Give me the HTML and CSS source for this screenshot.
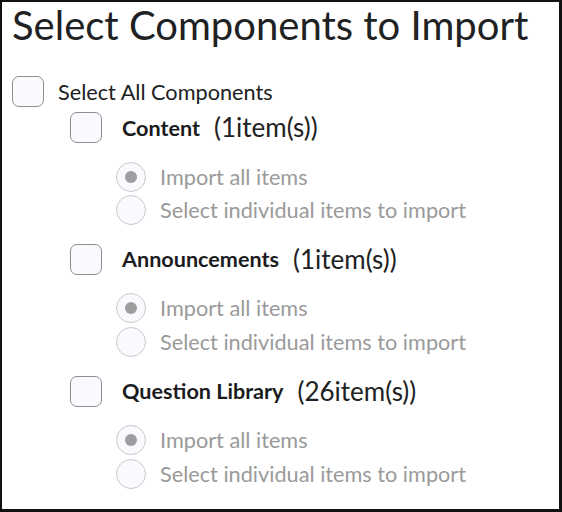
FILE: index.html
```html
<!DOCTYPE html>
<html>
<head>
<meta charset="utf-8">
<link rel="stylesheet" href="styles.css">
</head>
<body>
<div class="frame">
  <h1 class="title">Select Components to Import</h1>
  <div class="row select-all">
    <span class="checkbox"></span>
    <span class="all-label">Select All Components</span>
  </div>
  <div class="component">
    <div class="row comp-head">
      <span class="checkbox"></span>
      <span class="comp-name">Content</span>
      <span class="comp-count">(1item(s))</span>
    </div>
    <div class="options">
      <div class="row option"><span class="radio checked"></span><span class="opt-label">Import all items</span></div>
      <div class="row option"><span class="radio"></span><span class="opt-label">Select individual items to import</span></div>
    </div>
  </div>
  <div class="component">
    <div class="row comp-head">
      <span class="checkbox"></span>
      <span class="comp-name">Announcements</span>
      <span class="comp-count">(1item(s))</span>
    </div>
    <div class="options">
      <div class="row option"><span class="radio checked"></span><span class="opt-label">Import all items</span></div>
      <div class="row option"><span class="radio"></span><span class="opt-label">Select individual items to import</span></div>
    </div>
  </div>
  <div class="component">
    <div class="row comp-head">
      <span class="checkbox"></span>
      <span class="comp-name">Question Library</span>
      <span class="comp-count">(26item(s))</span>
    </div>
    <div class="options">
      <div class="row option"><span class="radio checked"></span><span class="opt-label">Import all items</span></div>
      <div class="row option"><span class="radio"></span><span class="opt-label">Select individual items to import</span></div>
    </div>
  </div>
</div>
</body>
</html>
```

FILE: styles.css
```css
html, body {
  margin: 0;
  padding: 0;
  background: #ffffff;
}

.frame {
  box-sizing: border-box;
  width: 562px;
  height: 512px;
  border: 2px solid #111111;
  border-right-width: 3px;
  border-bottom-width: 3px;
  padding: 0 0 0 10px;
  font-family: Lato, "Open Sans", sans-serif;
  color: #202122;
}

.title {
  margin: 0;
  font-size: 40px;
  font-weight: 400;
  line-height: 46px;
  letter-spacing: 0;
}

.row {
  display: flex;
  align-items: center;
}

.checkbox {
  box-sizing: border-box;
  width: 32px;
  height: 31px;
  border: 1.5px solid #8c8e91;
  border-radius: 7px;
  background: #f9fafe;
  flex: none;
}

.select-all {
  margin-top: 28px;
}

.all-label {
  margin-left: 14px;
  font-size: 21.7px;
}

.component {
  padding-left: 58px;
}

.comp-head {
  margin-top: 5px;
}

.comp-name {
  margin-left: 20px;
  font-size: 21.6px;
  font-weight: 700;
  color: #1b1c1d;
}

.comp-count {
  margin-left: 14px;
  font-size: 26px;
  line-height: 31px;
}

.options {
  padding: 17px 0 12px 46px;
}

.option {
  height: 33.4px;
}

.radio {
  box-sizing: border-box;
  position: relative;
  width: 30px;
  height: 30px;
  border: 1.5px solid #c8c9cb;
  border-radius: 50%;
  background: #f9fafe;
  flex: none;
}

.radio.checked::after {
  content: "";
  position: absolute;
  left: 50%;
  top: 50%;
  width: 12px;
  height: 12px;
  margin: -6px 0 0 -6px;
  border-radius: 50%;
  background: #9d9ea0;
}

.opt-label {
  margin-left: 14px;
  font-size: 21.7px;
  color: #9a9a9a;
}
```
